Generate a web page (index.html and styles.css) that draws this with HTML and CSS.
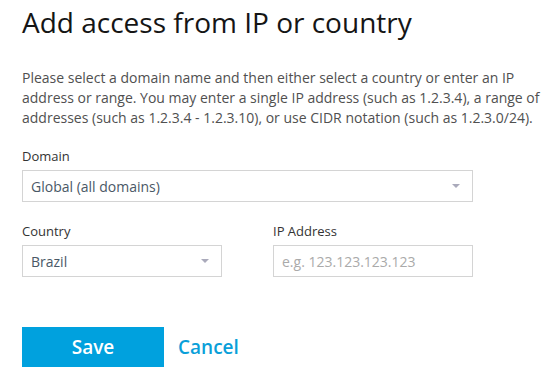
FILE: index.html
```html
<!DOCTYPE html>
<html>
<head>
<meta charset="utf-8">
<link rel="stylesheet" href="styles.css">
</head>
<body>
<div class="page">
  <h1 class="title">Add access from IP or country</h1>
  <p class="intro">Please select a domain name and then either select a country or enter an IP address or range. You may enter a single IP address (such as 1.2.3.4), a range of addresses (such as 1.2.3.4 - 1.2.3.10), or use CIDR notation (such as 1.2.3.0/24).</p>
  <div class="field field-wide">
    <label class="label">Domain</label>
    <div class="select"><span>Global (all domains)</span><span class="caret"></span></div>
  </div>
  <div class="row">
    <div class="field field-half">
      <label class="label">Country</label>
      <div class="select"><span>Brazil</span><span class="caret"></span></div>
    </div>
    <div class="field field-half">
      <label class="label">IP Address</label>
      <div class="input"><span class="placeholder">e.g. 123.123.123.123</span></div>
    </div>
  </div>
  <div class="actions">
    <button class="btn-save">Save</button>
    <a class="btn-cancel">Cancel</a>
  </div>
</div>
</body>
</html>
```

FILE: styles.css
```css
* { box-sizing: border-box; }
html, body { margin: 0; padding: 0; background: #fff; }
body { font-family: "Open Sans", "Noto Sans", sans-serif; }
.page { padding: 3px 0 0 22px; width: 545px; }
.title { margin: 0; font-size: 28px; font-weight: 400; line-height: 38px; color: #151515; }
.intro { margin: 27px 0 0; font-size: 14px; line-height: 20px; color: #505050; width: 523px; }
.field { display: flex; flex-direction: column; }
.field-wide { margin-top: 19px; width: 451px; }
.label { font-size: 13px; line-height: 18px; color: #333; margin-bottom: 5px; }
.select, .input { height: 32px; border: 1px solid #d4d4d4; display: flex; align-items: center; justify-content: space-between; padding: 0 12px 0 8px; font-size: 14px; color: #4a5866; }
.caret { width: 0; height: 0; border-left: 4px solid transparent; border-right: 4px solid transparent; border-top: 4px solid #aab; }
.row { display: flex; gap: 51px; margin-top: 20px; }
.field-half { width: 200px; }
.placeholder { color: #aaa; }
.actions { display: flex; align-items: center; gap: 14px; margin-top: 50px; }
.btn-save { width: 142px; height: 40px; border: 0; background: #00a1de; color: #fff; font-family: inherit; font-size: 19px; font-weight: 600; padding: 0; }
.btn-cancel { color: #0a9fd9; font-size: 19px; font-weight: 600; }
```
